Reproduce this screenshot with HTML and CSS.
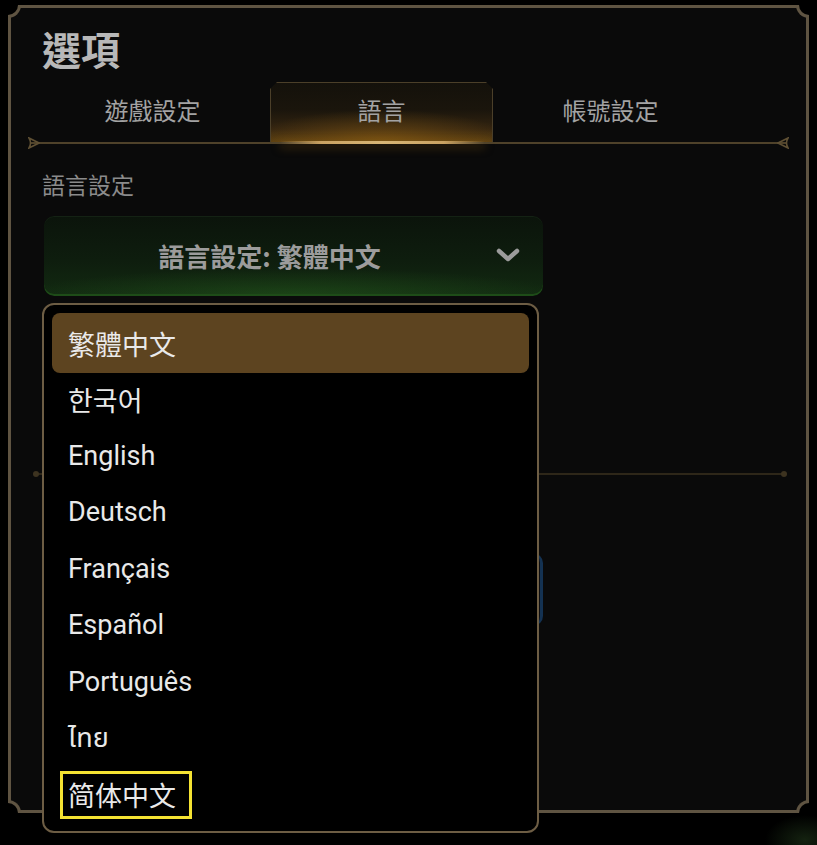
FILE: index.html
```html
<!DOCTYPE html>
<html lang="zh-Hant">
<head>
<meta charset="utf-8">
<title>選項</title>
<link rel="stylesheet" href="styles.css">
</head>
<body>
<div class="screen">
  <div class="panel">
    <span class="corner c-tl"></span>
    <span class="corner c-tr"></span>
    <span class="corner c-bl"></span>
    <span class="corner c-br"></span>
    <h1 class="title">選項</h1>
    <div class="tabs">
      <div class="tab">遊戲設定</div>
      <div class="tab active">語言</div>
      <div class="tab">帳號設定</div>
    </div>
    <div class="tabline">
      <svg class="orn orn-l" width="12" height="12" viewBox="0 0 12 12"><path d="M1 1 L11 6 L1 11 Q4 6 1 1 Z" fill="none" stroke="#5e4f33" stroke-width="1.6"/></svg>
      <span class="tabglow"></span>
      <svg class="orn orn-r" width="12" height="12" viewBox="0 0 12 12"><path d="M11 1 L1 6 L11 11 Q8 6 11 1 Z" fill="none" stroke="#5e4f33" stroke-width="1.6"/></svg>
    </div>
    <div class="content">
      <div class="label">語言設定</div>
      <div class="select">
        <span class="select-text">語言設定: 繁體中文</span>
        <svg class="chev" width="26" height="18" viewBox="0 0 26 18"><path d="M4 5 L13 13 L22 5" fill="none" stroke="#9b9b9b" stroke-width="4.5" stroke-linecap="round" stroke-linejoin="round"/></svg>
      </div>
      <div class="divider"></div>
      <div class="ghost-btn"></div>
    </div>
  </div>
  <ul class="menu">
    <li class="item selected">繁體中文</li>
    <li class="item" lang="ko">한국어</li>
    <li class="item">English</li>
    <li class="item">Deutsch</li>
    <li class="item">Français</li>
    <li class="item">Español</li>
    <li class="item">Português</li>
    <li class="item" lang="th">ไทย</li>
    <li class="item" lang="zh-Hans"><span class="focus">简体中文</span></li>
  </ul>
</div>
</body>
</html>
```

FILE: styles.css
```css
* { box-sizing: border-box; }
html, body {
  margin: 0;
  padding: 0;
  background: #000;
  width: 817px;
  height: 845px;
  overflow: hidden;
  font-family: "Noto Sans CJK TC", "Noto Sans", sans-serif;
}
.screen {
  position: relative;
  width: 817px;
  height: 845px;
  padding: 5px 8px 0 8px;
  background: radial-gradient(ellipse 40px 25px at 805px 840px, #142210 0%, rgba(0,0,0,0) 100%), #000;
}
.panel {
  position: relative;
  width: 801px;
  height: 808px;
  border: 3px solid #5f5442;
  background: #0a0a0a;
  display: flex;
  flex-direction: column;
}
.corner {
  position: absolute;
  width: 13px;
  height: 13px;
  background: #000;
  border: 0 solid #5f5442;
}
.c-tl { left: -3px; top: -3px; border-right-width: 3px; border-bottom-width: 3px; border-bottom-right-radius: 13px; }
.c-tr { right: -3px; top: -3px; border-left-width: 3px; border-bottom-width: 3px; border-bottom-left-radius: 13px; }
.c-bl { left: -3px; bottom: -3px; border-right-width: 3px; border-top-width: 3px; border-top-right-radius: 13px; }
.c-br { right: -3px; bottom: -3px; border-left-width: 3px; border-top-width: 3px; border-top-left-radius: 13px; }

.title {
  margin: 20px 0 0 31px;
  height: 40px;
  font-size: 39px;
  line-height: 40px;
  font-weight: 700;
  color: #b8b8b8;
}
.tabs {
  margin: 14px 0 0 30px;
  display: flex;
  gap: 6px;
  height: 60px;
}
.tab {
  width: 223px;
  height: 60px;
  display: flex;
  align-items: center;
  justify-content: center;
  padding-bottom: 6px;
  font-size: 24px;
  color: #a3a3a3;
}
.tab.active {
  border: 1px solid #4b3f29;
  border-bottom: none;
  clip-path: polygon(7px 0, calc(100% - 7px) 0, 100% 7px, 100% 100%, 0 100%, 0 7px);
  background:
    radial-gradient(ellipse 60% 55% at 50% 100%, rgba(150,100,20,0.55) 0%, rgba(150,100,20,0) 100%),
    linear-gradient(180deg, #14110b 0%, #1a150c 45%, #332410 78%, #5a3f12 100%);
}
.tabline {
  position: relative;
  margin: 0 19px;
  height: 2px;
  background: #4f422a;
}
.orn {
  position: absolute;
  top: -5px;
}
.orn-l { left: -2px; }
.orn-r { right: -2px; }
.tabglow {
  position: absolute;
  left: 250px;
  width: 205px;
  top: -1px;
  height: 3px;
  background: linear-gradient(90deg, rgba(200,160,90,0) 0%, #c9a262 20%, #d8b676 50%, #c9a262 80%, rgba(200,160,90,0) 100%);
  box-shadow: 0 3px 10px rgba(150,100,20,0.55);
}
.content {
  display: flex;
  flex-direction: column;
  align-items: flex-start;
}
.label {
  margin: 26px 0 0 31px;
  font-size: 23px;
  line-height: 28px;
  color: #8b8b8b;
}
.select {
  margin: 18px 0 0 33px;
  width: 499px;
  height: 80px;
  border-radius: 10px;
  display: flex;
  align-items: center;
  padding: 0 22px 2px 0;
  background:
    radial-gradient(ellipse 55% 35% at 50% 100%, rgba(40,100,30,0.45) 0%, rgba(40,100,30,0) 100%),
    linear-gradient(180deg, #0b140b 0%, #0e1d0e 55%, #122a11 100%);
  box-shadow: inset 0 -2px 0 #1e4c18, inset 0 1px 0 #142214;
}
.select-text {
  flex: 1;
  text-align: center;
  font-size: 26px;
  font-weight: 700;
  color: #9c9c9c;
}
.chev { display: block; }
.divider {
  position: relative;
  margin: 177px 0 0 24px;
  width: 750px;
  height: 2px;
  background: #2e2719;
}
.divider::before, .divider::after {
  content: "";
  position: absolute;
  top: -2px;
  width: 6px;
  height: 6px;
  border-radius: 50%;
  background: #3d3320;
}
.divider::before { left: -2px; }
.divider::after { right: -2px; }
.ghost-btn {
  margin: 78px 0 0 33px;
  width: 499px;
  height: 73px;
  border-radius: 10px;
  border-right: 3px solid #143252;
  background: #0b0c10;
}

.menu {
  position: absolute;
  left: 42px;
  top: 303px;
  width: 497px;
  height: 530px;
  margin: 0;
  padding: 8px;
  list-style: none;
  background: #000;
  border: 2px solid #6d5d44;
  border-radius: 12px;
}
.item {
  height: 56.5px;
  display: flex;
  align-items: center;
  padding-left: 16px;
  font-family: Roboto, "Noto Sans CJK TC", "Noto Sans Thai", "Noto Sans", sans-serif;
  font-size: 27px;
  color: #e9e9e9;
}
.item:lang(ko) { font-family: "Noto Sans CJK KR", sans-serif; }
.item:lang(zh-Hans) { font-family: "Noto Sans CJK SC", sans-serif; }
.item.selected {
  height: 60px;
  margin-bottom: -2px;
  border-radius: 8px;
  background: #5d4420;
  font-family: "Noto Sans CJK TC", sans-serif;
}
.focus {
  display: inline-flex;
  align-items: center;
  height: 48px;
  margin-left: -8px;
  padding: 0 13px 0 5px;
  border: 3px solid #f4e232;
}
```
